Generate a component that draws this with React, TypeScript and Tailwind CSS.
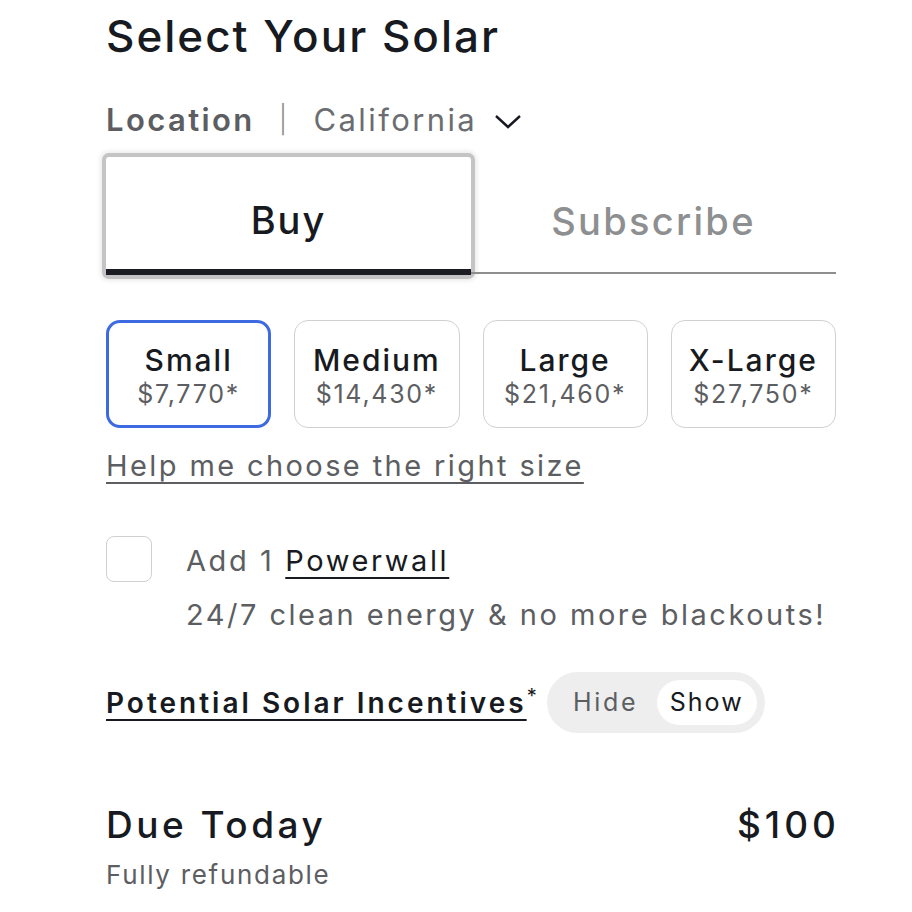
import { useState } from "react";

const SIZES = [
  { name: "Small", price: "$7,770*" },
  { name: "Medium", price: "$14,430*" },
  { name: "Large", price: "$21,460*" },
  { name: "X-Large", price: "$27,750*" },
];

export default function App() {
  const [selected, setSelected] = useState("Small");
  const [tab, setTab] = useState<"buy" | "subscribe">("buy");
  const [powerwall, setPowerwall] = useState(false);
  const [showIncentives, setShowIncentives] = useState(true);

  return (
    <main className="min-h-screen bg-white font-['Inter',sans-serif] text-[#171a20]">
      <div className="ml-[106px] flex w-[730px] flex-col">
        <div className="flex h-[72px] items-center">
          <h1 className="text-[44px] font-medium tracking-[2px]">Select Your Solar</h1>
        </div>

        <div className="mt-[24px] flex h-[48px] items-center text-[31px] tracking-[2.4px] text-[#6b6d70]">
          <span className="font-semibold text-[#5c5e62]">Location</span>
          <span className="mx-[24px] text-[27px] font-light text-[#8e8e8e]">|</span>
          <span>California</span>
          <svg className="ml-[17px] mt-[4px]" width="28" height="16" viewBox="0 0 28 16" fill="none">
            <polyline points="2,2 14,13 26,2" stroke="#171a20" strokeWidth="2.4" />
          </svg>
        </div>

        <div className="mt-[13px] flex">
          <button
            onClick={() => setTab("buy")}
            className="flex h-[118px] w-[365px] flex-col rounded-[3px] bg-white shadow-[0_0_0_4px_#c4c4c4,0_0_4px_6px_rgba(0,0,0,0.08)]"
          >
            <span className="flex flex-1 items-center justify-center pt-[14px] text-[38px] font-medium tracking-[2px]">
              Buy
            </span>
            <span
              className={`h-[6px] w-full ${tab === "buy" ? "bg-[#1b1d23]" : "bg-transparent"}`}
            />
          </button>
          <button
            onClick={() => setTab("subscribe")}
            className="flex h-[118px] flex-1 flex-col"
          >
            <span className="flex flex-1 items-center justify-center pt-[14px] text-[38px] font-medium tracking-[2.3px] text-[#8e8f91]">
              Subscribe
            </span>
            <span className="mb-[1px] h-[2px] w-full bg-[#8e8e8e]" />
          </button>
        </div>

        <div className="mt-[45px] grid grid-cols-4 gap-[23px]">
          {SIZES.map((size) => (
            <button
              key={size.name}
              onClick={() => setSelected(size.name)}
              className={`flex h-[108px] flex-col items-center justify-center rounded-[14px] bg-white ${
                selected === size.name
                  ? "border-[3px] border-[#3e6ae1]"
                  : "border-[1.5px] border-[#d0d1d2]"
              }`}
            >
              <span className="mt-[4px] text-[30px] font-medium leading-[36px] tracking-[2px]">
                {size.name}
              </span>
              <span className="text-[25px] leading-[32px] tracking-[1.7px] text-[#5c5e62]">
                {size.price}
              </span>
            </button>
          ))}
        </div>

        <div className="mt-[18px] flex h-[40px] items-center">
          <a className="text-[29px] tracking-[2.4px] text-[#5c5e62] underline decoration-[1.5px] underline-offset-[6px]">
            Help me choose the right size
          </a>
        </div>

        <div className="mt-[49px] flex items-center">
          <button
            onClick={() => setPowerwall(!powerwall)}
            className={`h-[46px] w-[46px] rounded-[8px] border-[1.5px] border-[#cfd0d1] ${
              powerwall ? "bg-[#3e6ae1]" : "bg-white"
            }`}
          />
          <span className="ml-[34px] mt-[4px] text-[29px] tracking-[2.6px] text-[#5c5e62]">
            Add 1{" "}
            <a className="text-[#171a20] underline decoration-[1.5px] underline-offset-[6px]">
              Powerwall
            </a>
          </span>
        </div>
        <div className="ml-[80px] mt-[10px] text-[29px] tracking-[2.5px] text-[#5c5e62]">
          24/7 clean energy &amp; no more blackouts!
        </div>

        <div className="mt-[36px] flex items-center">
          <a className="text-[28px] font-semibold tracking-[3px] underline decoration-[2px] underline-offset-[6px]">
            Potential Solar Incentives
          </a>
          <span className="mb-[14px] ml-[0px] text-[20px] leading-none">*</span>
          <div className="ml-[10px] flex h-[61px] w-[218px] items-center rounded-full bg-[#eeeeee] p-[8px] text-[25px]">
            <button
              onClick={() => setShowIncentives(false)}
              className={`flex h-full flex-1 items-center justify-center rounded-full tracking-[2.7px] ${
                !showIncentives ? "bg-white text-[#171a20]" : "text-[#5c5e62]"
              }`}
            >
              Hide
            </button>
            <button
              onClick={() => setShowIncentives(true)}
              className={`flex h-full w-[100px] items-center justify-center rounded-full tracking-[2px] ${
                showIncentives ? "bg-white text-[#171a20]" : "text-[#5c5e62]"
              }`}
            >
              Show
            </button>
          </div>
        </div>

        <div className="mt-[64px] flex items-center justify-between">
          <span className="text-[37px] font-medium tracking-[3.5px]">Due Today</span>
          <span className="mr-[-4px] text-[37px] font-medium tracking-[4px]">$100</span>
        </div>
        <div className="mt-[2px] text-[26px] tracking-[1.7px] text-[#5c5e62]">Fully refundable</div>
      </div>
    </main>
  );
}
